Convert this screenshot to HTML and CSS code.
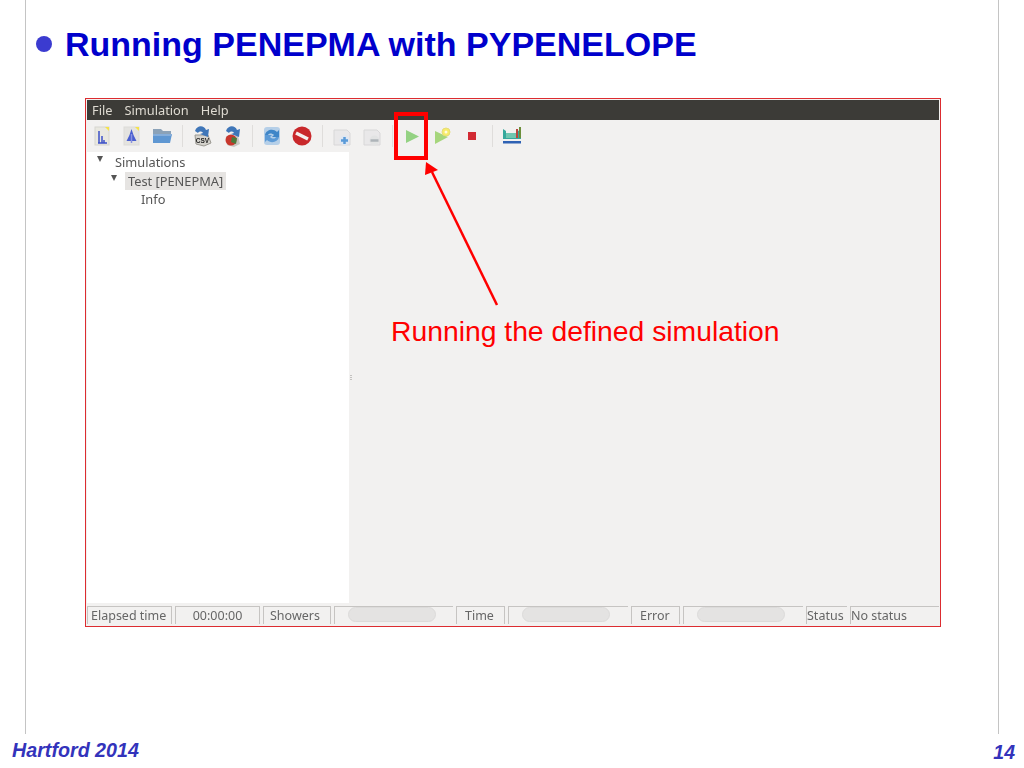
FILE: index.html
```html
<!DOCTYPE html>
<html lang="en">
<head>
<meta charset="utf-8">
<title>Running PENEPMA with PYPENELOPE</title>
<link rel="stylesheet" href="styles.css">
</head>
<body>
<div class="slide">
  <main class="frame">
    <h1 class="title"><span class="bullet"></span>Running PENEPMA with PYPENELOPE</h1>
    <div class="shot">
      <div class="window">
        <nav class="menubar"><span>File</span><span>Simulation</span><span>Help</span></nav>
        <div class="toolbar">
          <span class="tool"><svg width="24" height="24" viewBox="0 0 24 24"><rect x="5" y="3" width="14" height="18" fill="#e9e8e0" stroke="#d6d5d0"/><path d="M15 3h4v4z" fill="#f5e34a"/><path d="M8 19h9M9 19V7M12 19v-7M14 19v-3" stroke="#3c50c8" stroke-width="1.500" fill="none"/></svg></span>
          <span class="tool"><svg width="24" height="24" viewBox="0 0 24 24"><rect x="4" y="3" width="15" height="18" fill="#e4e3e0" stroke="#dcdbd8"/><path d="M15 3h4v4z" fill="#f5e34a"/><path d="M11.500 5l2 6 3 6h-10l3-6z" fill="#4a5fd0"/><path d="M11.500 10v9" stroke="#8a93e0" stroke-width="1.500"/></svg></span>
          <span class="tool"><svg width="24" height="24" viewBox="0 0 24 24"><path d="M3 5h8l2 2h8v4H3z" fill="#8ba2b8"/><path d="M3 10h19l-2 9H3z" fill="#5f97d2"/><path d="M3 10h19v2H3z" fill="#86aeda"/></svg></span>
          <span class="sep"></span>
          <span class="tool"><svg width="24" height="24" viewBox="0 0 24 24"><path d="M5 11h13l3 8-7 3-8-2z" fill="#d4d2cc" stroke="#9a9891"/><path d="M5 7c2-6 9-6 11-1l3-1-1 8-8-3 3-1c-1-2-4-2-5 0z" fill="#3f76b8"/><text class="csv" x="12.500" y="19">CSV</text></svg></span>
          <span class="tool"><svg width="24" height="24" viewBox="0 0 24 24"><path d="M6 12h12l2 8-6 3-7-2z" fill="#c9c7c2"/><circle cx="11" cy="16" r="5.500" fill="#c8372d"/><path d="M12 13l5 1-1 6-5-2z" fill="#4a7a3a"/><path d="M6 7c2-6 9-6 11-1l3-1-1 8-8-3 3-1c-1-2-4-2-5 0z" fill="#3f76b8"/></svg></span>
          <span class="sep"></span>
          <span class="tool"><svg width="24" height="24" viewBox="0 0 24 24"><rect x="4" y="3" width="16" height="18" rx="3" fill="#b5cfe8"/><path d="M5 11c1-5 8-7 12-3l2-2v7h-7l2-2c-2-2-5-2-6 0z" fill="#3f86c8"/><path d="M19 13c-1 5-8 7-12 3l-2 2v-7h7l-2 2c2 2 5 2 6 0z" fill="#5c9ad6"/></svg></span>
          <span class="tool"><svg width="24" height="24" viewBox="0 0 24 24"><circle cx="12" cy="12" r="9.500" fill="#c9282b"/><path d="M6 9l12 6" stroke="#f4f0ee" stroke-width="3.500"/></svg></span>
          <span class="sep"></span>
          <span class="tool"><svg width="24" height="24" viewBox="0 0 24 24"><path d="M4 6h13l3 3v12H4z" fill="#e9e8e9" stroke="#d8d7d8"/><circle cx="14.500" cy="16.500" r="5" fill="#dfe7f2"/><path d="M11 16.500h7M14.500 13v7" stroke="#5b9bd8" stroke-width="2.500"/></svg></span>
          <span class="tool"><svg width="24" height="24" viewBox="0 0 24 24"><path d="M4 6h13l3 3v12H4z" fill="#e9e8e9" stroke="#d8d7d8"/><circle cx="14.500" cy="16.500" r="5" fill="#e2e3e3"/><path d="M10.500 16.500h8" stroke="#aeb4b9" stroke-width="2.500"/></svg></span>
          <span class="sep"></span>
          <span class="tool"><svg width="24" height="24" viewBox="0 0 24 24"><path d="M6 6l13 6.500L6 19z" fill="#94d283"/></svg></span>
          <span class="tool"><svg width="24" height="24" viewBox="0 0 24 24"><path d="M5 7l13 6-13 7z" fill="#a6d67c"/><circle cx="16" cy="8" r="4" fill="#f7ec6a" stroke="#e6dc78"/><circle cx="16" cy="8" r="1.500" fill="#fffbe0"/></svg></span>
          <span class="tool"><svg width="24" height="24" viewBox="0 0 24 24"><rect x="8" y="8" width="8" height="8" fill="#d22a33"/></svg></span>
          <span class="sep"></span>
          <span class="tool"><svg width="24" height="24" viewBox="0 0 24 24"><path d="M3 5l3 2v7h12V7l3-2v10H3z" fill="#35a89c"/><path d="M6 9h12v5H6z" fill="#6fc6b0"/><rect x="16" y="5" width="2" height="9" fill="#b9463e"/><rect x="19" y="3" width="2" height="11" fill="#6c8e3a"/><rect x="3" y="17" width="18" height="2.500" fill="#2f62b4"/></svg></span>
        </div>
        <div class="panes">
          <ul class="tree">
            <li class="row lvl1"><span class="arrow"></span>Simulations</li>
            <li class="row lvl2"><span class="arrow"></span><span class="sel">Test [PENEPMA]</span></li>
            <li class="row lvl3">Info</li>
          </ul>
          <div class="grip"><i></i><i></i><i></i></div>
          <div class="detail"></div>
        </div>
        <footer class="status">
          <span class="cell w85">Elapsed time</span>
          <span class="cell w85 mid">00:00:00</span>
          <span class="cell w67">Showers</span>
          <span class="cell w119 wide"><b class="bar"></b></span>
          <span class="cell w49">Time</span>
          <span class="cell w120 wide"><b class="bar"></b></span>
          <span class="cell w49">Error</span>
          <span class="cell w120 wide"><b class="bar"></b></span>
          <span class="cell w41 tight">Status</span>
          <span class="cell grow tight">No status</span>
        </footer>
      </div>
      <div class="redbox"></div>
      <svg class="pointer" width="90" height="150" viewBox="0 0 90 150"><path d="M78 144L13 11" stroke="#f00" stroke-width="2.500" fill="none"/><path d="M7 1l12 8-13 5z" fill="#f00"/></svg>
      <p class="note">Running the defined simulation</p>
    </div>
  </main>
  <footer class="foot"><span class="place">Hartford 2014</span><span class="page">14</span></footer>
</div>
</body>
</html>
```

FILE: styles.css
```css
html, body { margin: 0; padding: 0; background: #fff; }
.slide { width: 1024px; height: 768px; overflow: hidden; font-family: "Liberation Sans", Arial, sans-serif; }
.frame { box-sizing: border-box; width: 974px; height: 734px; margin-left: 25px; border-left: 1px solid #c4c4c4; border-right: 1px solid #c4c4c4; padding-top: 24px; }
.title { display: flex; align-items: center; margin: 0 0 0 10px; height: 40px; font-size: 34px; line-height: 38px; font-weight: bold; color: #0000cc; white-space: nowrap; }
.bullet { width: 16px; height: 16px; border-radius: 50%; background: #3b3bd0; margin-right: 13px; flex: none; }
.shot { position: relative; width: 856px; height: 529px; margin: 34px 0 0 59px; }
.window { box-sizing: border-box; width: 856px; height: 529px; border: 1px solid #dc2c30; padding: 1px 1px 2px 1px; display: flex; flex-direction: column; background: #f2f1f0; font-family: "Noto Sans", "Open Sans", sans-serif; font-size: 12.800px; filter: blur(0.45px); }
.menubar { height: 20px; flex: none; background: #3c3b37; color: #dfdbd2; display: flex; align-items: center; gap: 12px; padding-left: 5px; }
.toolbar { height: 32px; flex: none; display: flex; align-items: center; background: #f2f1f0; }
.tool { width: 30px; height: 32px; display: flex; align-items: center; justify-content: center; }
.sep { width: 10px; height: 22px; position: relative; background: linear-gradient(#dfdddb, #dfdddb) center / 1px 100% no-repeat; }
.csv { font: bold 6.500px "Liberation Sans", sans-serif; fill: #222; text-anchor: middle; }
.panes { flex: 1; display: flex; min-height: 0; }
.tree { list-style: none; margin: 0; padding: 1px 0 0; width: 262px; flex: none; background: #fff; color: #555; }
.row { height: 18.500px; display: flex; align-items: center; position: relative; }
.lvl1 { padding-left: 28px; }
.lvl2 { padding-left: 38px; }
.lvl3 { padding-left: 54px; }
.arrow { position: absolute; top: 3px; width: 0; height: 0; border-left: 3.500px solid transparent; border-right: 3.500px solid transparent; border-top: 6px solid #555; }
.lvl1 .arrow { left: 10px; }
.lvl2 .arrow { left: 24px; }
.sel { background: #e6e4e2; padding: 0 3px; line-height: 18px; }
.grip { width: 3px; display: flex; flex-direction: column; align-items: center; justify-content: center; gap: 1px; flex: none; }
.grip i { width: 2px; height: 1px; background: #c4c2c0; }
.detail { flex: 1; }
.status { height: 21px; flex: none; display: flex; gap: 3px; color: #666; padding-top: 3px; box-sizing: border-box; font-size: 12.500px; }
.cell { box-sizing: border-box; height: 18px; border: 1px solid #c6c4c2; border-bottom: 0; display: flex; align-items: center; padding-left: 3px; white-space: nowrap; }
.mid { justify-content: center; padding-left: 0; }
.w85 { width: 85px; }
.w67 { width: 68px; padding-left: 6px; }
.w119 { width: 119px; }
.w49 { width: 49px; padding-left: 8px; }
.w120 { width: 120px; }
.w41 { width: 41px; padding-left: 0; }
.wide { padding-left: 13px; border-right: 0; align-items: flex-start; }
.tight { padding-left: 0; border-right: 0; }
.grow { flex: 1; }
.bar { display: block; box-sizing: border-box; width: 88px; height: 15px; border: 1px solid #dcdbda; border-radius: 8px; background: #e4e3e2; }
.redbox { position: absolute; left: 309px; top: 14px; box-sizing: border-box; width: 34px; height: 48px; border: 4px solid #f00; }
.pointer { position: absolute; left: 334px; top: 63px; overflow: visible; }
.note { position: absolute; left: 306px; top: 215px; margin: 0; font-family: "Liberation Sans", Arial, sans-serif; font-size: 28.300px; line-height: 36px; color: #f00; white-space: nowrap; }
.foot { display: flex; justify-content: space-between; align-items: center; height: 34px; padding: 0 9px 0 12px; font-weight: bold; font-style: italic; color: #3333bb; }
.place { font-size: 19.700px; margin-top: -1px; }
.page { font-size: 19.500px; margin-top: 3px; }
```
